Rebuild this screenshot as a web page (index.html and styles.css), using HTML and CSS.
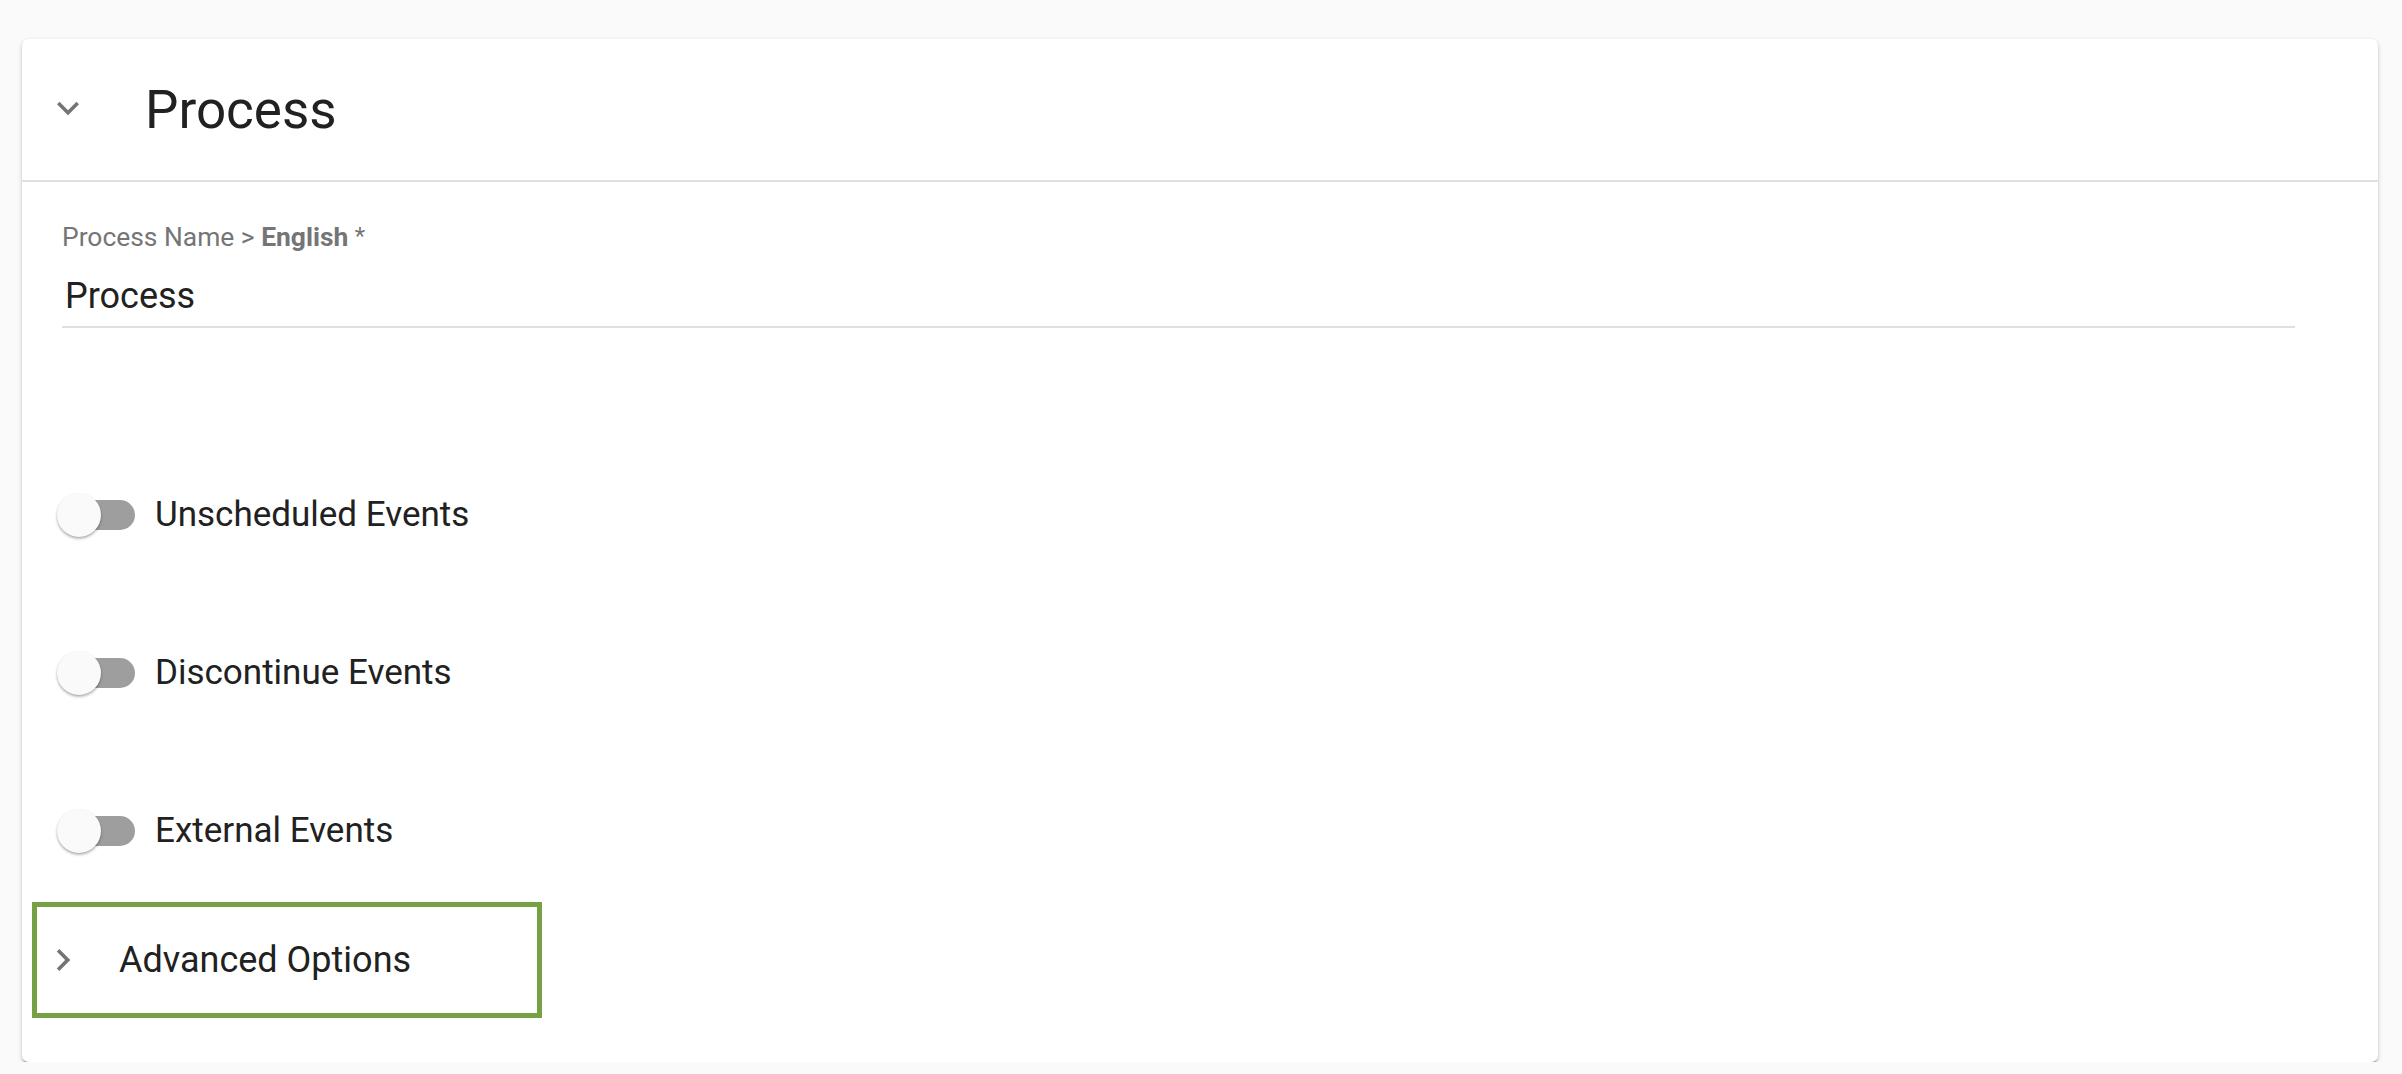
FILE: index.html
```html
<!DOCTYPE html>
<html>
<head>
<title>Process</title>
<meta http-equiv="content-type" content="text/html; charset=utf-8" />
<link rel="stylesheet" href="styles.css">
</head>
<body>

<div class="card">
	<div class="card-header">
		<svg class="icon" viewBox="0 0 24 24"><path d="M16.59 8.59L12 13.17 7.41 8.59 6 10l6 6 6-6z"/></svg>
		<h2 class="title">Process</h2>
	</div>

	<div class="card-body">
		<div class="field">
			<label class="field-label" for="processName">Process Name &gt; <b>English</b> <span class="req">*</span></label>
			<input type="text" id="processName" class="field-input" value="Process" />
		</div>

		<div class="switches">
			<div class="switch-row">
				<span class="switch"><span class="track"></span><span class="thumb"></span></span>
				<span class="switch-label">Unscheduled Events</span>
			</div>
			<div class="switch-row">
				<span class="switch"><span class="track"></span><span class="thumb"></span></span>
				<span class="switch-label">Discontinue Events</span>
			</div>
			<div class="switch-row">
				<span class="switch"><span class="track"></span><span class="thumb"></span></span>
				<span class="switch-label">External Events</span>
			</div>
		</div>

		<div class="advanced">
			<svg class="icon" viewBox="0 0 24 24"><path d="M10 6L8.59 7.41 13.17 12l-4.58 4.59L10 18l6-6z"/></svg>
			<span class="advanced-label">Advanced Options</span>
		</div>
	</div>
</div>

</body>
</html>
```

FILE: styles.css
```css
body {margin: 0; background-color: #fafafa; font-family: Roboto, "Noto Sans", Arial, sans-serif; color: #212121;}

.card {margin: 39px 24px 0 22px; background-color: #fff; border-radius: 7px; box-shadow: 0 2px 5px rgba(0,0,0,0.18), 0 2px 2px rgba(0,0,0,0.12), 0 4px 2px -2px rgba(0,0,0,0.2);}

.card-header {display: flex; align-items: center; height: 141px; border-bottom: 2px solid #e0e0e0;}
.card-header .icon {margin-left: 24px; margin-top: -3px;}
.title {margin: 0 0 0 55px; font-size: 53px; font-weight: 400; line-height: 64px;}

.icon {width: 44px; height: 44px; flex: none; fill: #757575;}

.card-body {padding: 39px 0 44px 10px;}

.field {display: flex; flex-direction: column; margin: 0 83px 0 30px;}
.field-label {font-size: 26.4px; line-height: 32px; color: #757575; margin-bottom: 21px;}
.field-label b {font-weight: 700;}
.field-label .req {position: relative; top: -2px; font-size: 24px;}
.field-input {font-family: inherit; font-size: 36px; line-height: 42px; height: 42px; color: #212121; border: none; border-bottom: 2px solid #e0e0e0; padding: 0 0 9px 3px; margin: 0; outline: none; background: transparent;}

.switches {display: flex; flex-direction: column; gap: 98px; margin: 157px 0 0 25px;}
.switch-row {display: flex; align-items: center; height: 60px;}
.switch {position: relative; display: inline-flex; align-items: center; width: 78px; height: 44px;}
.track {display: block; margin-left: 4px; width: 74px; height: 30px; border-radius: 15px; background-color: #9e9e9e;}
.thumb {position: absolute; left: 0; top: 0; width: 44px; height: 44px; border-radius: 50%; background-color: #fafafa; box-shadow: 0 2px 3px rgba(0,0,0,0.22), 0 1px 2px rgba(0,0,0,0.16);}
.switch-label {margin-left: 20px; font-size: 35px; line-height: 42px;}

.advanced {display: flex; align-items: center; box-sizing: border-box; width: 510px; height: 116px; margin-top: 41px; border: 5px solid #76a044;}
.advanced .icon {margin-left: 4px;}
.advanced-label {margin-left: 34px; font-size: 36px; line-height: 42px;}
```
